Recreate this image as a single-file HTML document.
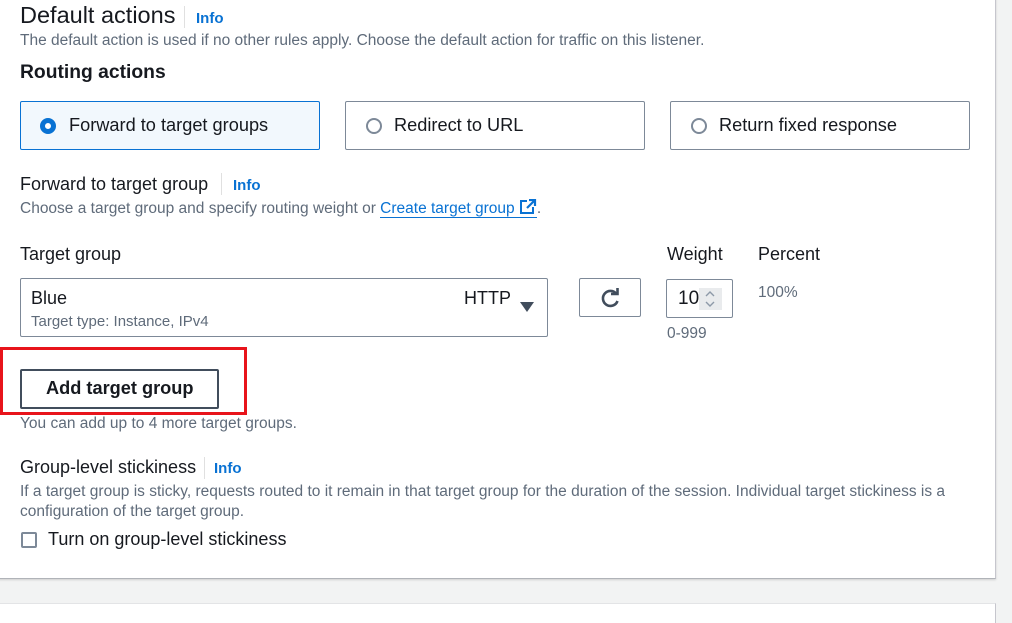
<!DOCTYPE html>
<html><head><meta charset="utf-8"><style>
*{box-sizing:border-box;margin:0;padding:0}
body{width:1012px;height:610px;background:#f2f3f3;font-family:"Liberation Sans",sans-serif;color:#16191f;position:relative;overflow:hidden}
.card{position:absolute;left:-2px;top:-5px;width:998px;height:584px;background:#fff;border-right:1px solid #c6c6cd;border-bottom:1px solid #b0b3b8;box-shadow:0 1px 2px rgba(0,0,0,.15)}
.card2{position:absolute;left:-2px;top:603px;width:998px;height:20px;background:#fff;border-top:1px solid #e3e4e6;border-right:1px solid #c6c6cd}
.a{position:absolute;white-space:nowrap}
.info{color:#0972d3;font-weight:bold;font-size:15px}
.sep{position:absolute;width:1px;background:#e0e0e0}
.g{color:#5f6b7a;font-size:15.5px}
.box{position:absolute;border:1px solid #7d8998;border-radius:2px;background:#fff}
.radio{position:absolute;width:16px;height:16px;border-radius:50%;border:2px solid #7d8998;background:#fff}
.opt{font-size:18.2px}
.l{font-size:18px}
</style></head><body>
<div class="card"></div>
<div class="card2"></div>
<div class="a" style="left:20px;top:2px;font-size:23.5px">Default actions</div>
<div class="sep" style="left:184px;top:6px;height:22px"></div>
<div class="a info" style="left:196px;top:10px">Info</div>
<div class="a g" style="left:20px;top:32px">The default action is used if no other rules apply. Choose the default action for traffic on this listener.</div>
<div class="a" style="left:20px;top:62px;font-size:19.3px;font-weight:bold">Routing actions</div>

<div class="box" style="left:20px;top:101px;width:300px;height:49px;background:#f2f8fd;border-color:#0972d3"></div>
<div class="radio" style="left:40px;top:118px;border:5px solid #0972d3"></div>
<div class="a opt" style="left:69px;top:115px">Forward to target groups</div>
<div class="box" style="left:345px;top:101px;width:300px;height:49px"></div>
<div class="radio" style="left:366px;top:118px"></div>
<div class="a opt" style="left:394px;top:115px">Redirect to URL</div>
<div class="box" style="left:670px;top:101px;width:300px;height:49px"></div>
<div class="radio" style="left:691px;top:118px"></div>
<div class="a opt" style="left:719px;top:115px">Return fixed response</div>

<div class="a l" style="left:20px;top:174px">Forward to target group</div>
<div class="sep" style="left:221px;top:173px;height:22px"></div>
<div class="a info" style="left:233px;top:177px">Info</div>
<div class="a g" style="left:20px;top:199px">Choose a target group and specify routing weight or <span style="color:#0972d3;border-bottom:1px solid #0972d3">Create target group <svg width="18" height="16" viewBox="0 0 18 16" style="vertical-align:-2px"><path d="M8 2H2v12h12V8" fill="none" stroke="#0972d3" stroke-width="2"/><path d="M10 1h6v6M16 1L8 9" fill="none" stroke="#0972d3" stroke-width="2.2"/></svg></span>.</div>

<div class="a l" style="left:20px;top:244px">Target group</div>
<div class="a l" style="left:667px;top:244px">Weight</div>
<div class="a l" style="left:758px;top:244px">Percent</div>

<div class="box" style="left:20px;top:278px;width:528px;height:59px"></div>
<div class="a l" style="left:31px;top:288px">Blue</div>
<div class="a l" style="left:464px;top:288px">HTTP</div>
<svg class="a" style="left:520px;top:302px" width="14" height="10"><path d="M0 0h14L7 10z" fill="#414d5c"/></svg>
<div class="a g" style="left:31px;top:313px;font-size:15px">Target type: Instance, IPv4</div>

<div class="box" style="left:579px;top:278px;width:62px;height:39px"></div>
<svg class="a" style="left:599px;top:287px" width="22" height="22" viewBox="0 0 22 22"><path d="M17.5 7A7.5 7.5 0 1 0 18.5 14" fill="none" stroke="#414d5c" stroke-width="2.6"/><path d="M12 7h6.5V1" fill="none" stroke="#414d5c" stroke-width="2.6"/></svg>

<div class="box" style="left:666px;top:279px;width:67px;height:39px"></div>
<div class="a" style="left:678px;top:288px;font-size:19px">10</div>
<div class="a" style="left:699px;top:288px;width:23px;height:22px;background:#e9ebed"></div>
<svg class="a" style="left:704px;top:290px" width="12" height="18"><path d="M2 6l4-4 4 4M2 12l4 4 4-4" fill="none" stroke="#8d99a8" stroke-width="1.4"/></svg>
<div class="a g" style="left:758px;top:284px">100%</div>
<div class="a g" style="left:667px;top:325px">0-999</div>

<div class="a" style="left:0;top:347px;width:247px;height:68px;border:3px solid #e8141b"></div>
<div class="box" style="left:20px;top:369px;width:199px;height:40px;border:2px solid #414d5c"></div>
<div class="a" style="left:46px;top:378px;font-size:18.2px;font-weight:bold">Add target group</div>
<div class="a g" style="left:20px;top:415px">You can add up to 4 more target groups.</div>

<div class="a l" style="left:20px;top:457px">Group-level stickiness</div>
<div class="sep" style="left:204px;top:457px;height:22px"></div>
<div class="a info" style="left:214px;top:460px">Info</div>
<div class="a g" style="left:20px;top:483px">If a target group is sticky, requests routed to it remain in that target group for the duration of the session. Individual target stickiness is a</div>
<div class="a g" style="left:20px;top:503px">configuration of the target group.</div>
<div class="a" style="left:21px;top:532px;width:16px;height:16px;border:2px solid #7d8998;border-radius:2px"></div>
<div class="a l" style="left:48px;top:529px">Turn on group-level stickiness</div>
</body></html>
